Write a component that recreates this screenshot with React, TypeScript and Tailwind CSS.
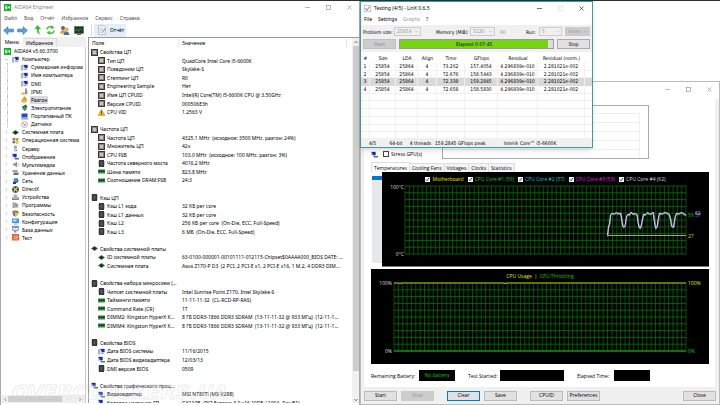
import type { ReactNode } from "react";
import { ChevronDown, ChevronRight, ChevronLeft, ChevronUp } from "lucide-react";

type IconName =
  | "app" | "pc" | "display" | "ipmi" | "flame" | "power" | "laptop" | "sensor" | "board"
  | "windows" | "server" | "sound" | "disk" | "net" | "directx" | "device" | "programs"
  | "shield" | "config" | "db" | "test" | "chip" | "cache" | "ram" | "warn";

const shapes: Record<IconName, ReactNode> = {
  app: (
    <>
      <rect width="14" height="14" fill="#12b32c" />
      <path d="M6 4H3v6h3V7H3M8 4v3h4M11 4v6" stroke="#fff" strokeWidth="1.4" fill="none" />
    </>
  ),
  pc: (
    <>
      <rect x="0" y="2" width="4" height="11" fill="#a9b4c4" />
      <rect x="4" y="1" width="10" height="8" fill="#c9d4ee" />
      <path d="M5 2h8v6H8z" fill="#1527c8" />
      <path d="M7 9h4v2h2v1H5v-1h2z" fill="#8c97ab" />
    </>
  ),
  display: (
    <>
      <rect x="0" y="1" width="10" height="8" fill="#b8c6e8" />
      <path d="M1 2h8v6H4z" fill="#1424cf" />
      <path d="M4 9h4v2H4z" fill="#7a879c" />
      <path d="M6 10h8v3H6z" fill="#3b8a4c" />
    </>
  ),
  ipmi: (
    <>
      <path d="M3 13h10V6H9z" fill="#c4c6c9" />
      <rect x="8" y="1" width="4" height="11" fill="#8d949b" />
      <rect x="1" y="9" width="5" height="4" fill="#d8b53c" />
    </>
  ),
  flame: (
    <>
      <path d="M6 0c4 4 7 6 5 10-1 4-9 5-10 0 0-3 3-3 5-10z" fill="#f08a12" />
      <path d="M6 6c2 2 3 3 2 6H4c-1-3 1-3 2-6z" fill="#ffd23e" />
    </>
  ),
  power: (
    <>
      <path d="M2 5l8-4 3 5-7 6z" fill="#4d5a55" />
      <path d="M2 8l5-3 5 5-5 4z" fill="#2f9e4a" />
    </>
  ),
  laptop: (
    <>
      <rect x="1" y="1" width="12" height="8" fill="#1c4ed0" />
      <path d="M0 10h14v3H1z" fill="#98a2b4" />
    </>
  ),
  sensor: (
    <>
      <circle cx="7" cy="7" r="6" fill="#fff" stroke="#b99a9a" strokeWidth="1.5" />
      <path d="M4 4l4 5M7 9l3-4" stroke="#cc3a34" strokeWidth="1.5" />
    </>
  ),
  board: (
    <>
      <path d="M0 7l7-5 7 5-7 5z" fill="#2c6b40" />
      <path d="M3 7l4-3 4 3-4 3z" fill="#1c2b24" />
    </>
  ),
  windows: (
    <>
      <path d="M1 3q3-2 5-1v5q-3-1-5 0z" fill="#ef5a24" />
      <path d="M7 2q3 1 6-1v6q-3 1-6 0z" fill="#7cba2c" />
      <path d="M1 8q3-1 5 0v5q-3-1-5 0z" fill="#2b8be0" />
      <path d="M7 8q3 1 6 0v5q-3 1-6 0z" fill="#f9b81e" />
    </>
  ),
  server: (
    <>
      <rect x="4" y="1" width="6" height="12" fill="#c2c8ce" />
      <path d="M5 3h4M5 5h4" stroke="#69727c" />
      <rect x="8" y="10" width="2" height="2" fill="#35a858" />
    </>
  ),
  sound: (
    <>
      <path d="M2 5h3l5-4v12L5 9H2z" fill="#8a929b" />
      <path d="M12 4q2 3 0 6" stroke="#4590c8" fill="none" />
    </>
  ),
  disk: (
    <>
      <rect x="1" y="2" width="10" height="4" fill="#9aa2aa" />
      <rect x="3" y="7" width="10" height="5" fill="#68717a" />
      <rect x="10" y="9" width="2" height="2" fill="#41c05b" />
    </>
  ),
  net: (
    <>
      <circle cx="8" cy="5" r="5" fill="#3578da" />
      <path d="M5 3q4-2 5 1l-3 3z" fill="#59bd55" />
      <path d="M2 8h6v4H2z" fill="#24329c" />
    </>
  ),
  directx: (
    <>
      <circle cx="7" cy="7" r="6.5" fill="#1c2a7a" />
      <path d="M3 3l8 8M11 3l-8 8" stroke="#f0dc2a" strokeWidth="2.5" />
    </>
  ),
  device: (
    <>
      <path d="M4 1h6l1 6H3z" fill="#9fb5a5" />
      <path d="M0 7h14v5H0z" fill="#7c8790" />
      <path d="M2 9h10" stroke="#d8dde1" />
    </>
  ),
  programs: (
    <>
      <rect x="1" y="1" width="8" height="11" fill="#9aa1a8" />
      <rect x="5" y="3" width="8" height="9" fill="#c7cdd4" />
      <path d="M6 5h6M6 7h6M6 9h4" stroke="#546070" />
    </>
  ),
  shield: (
    <>
      <path d="M7 0v7H1V2q4 0 6-2z" fill="#e84c24" />
      <path d="M7 0q3 2 6 2v5H7z" fill="#58a830" />
      <path d="M1 7h6v7Q2 11 1 7z" fill="#2f70d8" />
      <path d="M7 7h6q-1 4-6 7z" fill="#f7c022" />
    </>
  ),
  config: (
    <>
      <rect x="0" y="1" width="14" height="9" fill="#3f97e4" />
      <rect x="2" y="3" width="7" height="4" fill="#bfe0fa" />
      <path d="M4 11h7v2H4z" fill="#8792a0" />
    </>
  ),
  db: (
    <>
      <rect x="1" y="1" width="12" height="8" fill="#d3dff2" stroke="#4c6cb4" />
      <rect x="1" y="1" width="12" height="2" fill="#3a64c2" />
      <path d="M4 9h5v4H4z" fill="#87919f" />
    </>
  ),
  test: (
    <>
      <rect width="14" height="13" fill="#f0622a" />
      <path d="M3 4h3v6H3M8 4h3v3H8v3h3" stroke="#ffd9bd" strokeWidth="1.3" fill="none" />
    </>
  ),
  chip: (
    <>
      <rect width="14" height="14" fill="#3a3735" />
      <rect x="2" y="2" width="10" height="10" fill="#8a847f" />
      <rect x="4" y="4" width="6" height="6" fill="#c8c4be" />
    </>
  ),
  cache: (
    <>
      <rect x="2" y="0" width="10" height="14" fill="#36373a" />
      <path d="M1 2v10M13 2v10" stroke="#8b8d90" strokeDasharray="1 1" strokeWidth="2" />
      <rect x="5" y="3" width="4" height="8" fill="#57595d" />
    </>
  ),
  ram: (
    <>
      <rect y="3" width="14" height="8" fill="#1f8a44" />
      <path d="M2 5h3v3H2zM6 5h3v3H6zM10 5h3v3h-3z" fill="#1b2a22" />
      <path d="M0 10.5h14" stroke="#c9b54a" />
    </>
  ),
  warn: (
    <>
      <path d="M7 0l7 13H0z" fill="#f7b41c" stroke="#d98c0c" />
      <path d="M7 4v5M7 10v2" stroke="#3a2a08" strokeWidth="1.6" />
    </>
  ),
};

const Icon = ({ name }: { name: IconName }) => (
  <svg viewBox="0 0 14 14" className="size-[7px] shrink-0">{shapes[name]}</svg>
);

interface TreeItem {
  icon: IconName;
  text: string;
  level: number;
  selected?: boolean;
}

const tree: TreeItem[] = [
  { icon: "app", text: "AIDA64 v5.60.3700", level: 0 },
  { icon: "pc", text: "Компьютер", level: 1 },
  { icon: "pc", text: "Суммарная информа", level: 2 },
  { icon: "pc", text: "Имя компьютера", level: 2 },
  { icon: "pc", text: "DMI", level: 2 },
  { icon: "ipmi", text: "IPMI", level: 2 },
  { icon: "flame", text: "Разгон", level: 2, selected: true },
  { icon: "power", text: "Электропитание", level: 2 },
  { icon: "laptop", text: "Портативный ПК", level: 2 },
  { icon: "sensor", text: "Датчики", level: 2 },
  { icon: "board", text: "Системная плата", level: 1 },
  { icon: "windows", text: "Операционная система", level: 1 },
  { icon: "server", text: "Сервер", level: 1 },
  { icon: "display", text: "Отображение", level: 1 },
  { icon: "sound", text: "Мультимедиа", level: 1 },
  { icon: "disk", text: "Хранение данных", level: 1 },
  { icon: "net", text: "Сеть", level: 1 },
  { icon: "directx", text: "DirectX", level: 1 },
  { icon: "device", text: "Устройства", level: 1 },
  { icon: "programs", text: "Программы", level: 1 },
  { icon: "shield", text: "Безопасность", level: 1 },
  { icon: "config", text: "Конфигурация", level: 1 },
  { icon: "db", text: "База данных", level: 1 },
  { icon: "test", text: "Тест", level: 1 },
];

// [icon, field, value]; no value means a group heading, null is an empty line
type ReportRow = [IconName, string, string?] | null;

const report: ReportRow[] = [
  ["chip", "Свойства ЦП"],
  ["chip", "Тип ЦП", "QuadCore Intel Core i5-6600K"],
  ["chip", "Псевдоним ЦП", "Skylake-S"],
  ["chip", "Степпинг ЦП", "R0"],
  ["chip", "Engineering Sample", "Нет"],
  ["chip", "Имя ЦП CPUID", "Intel(R) Core(TM) i5-6600K CPU @ 3.50GHz"],
  ["chip", "Версия CPUID", "000506E3h"],
  ["warn", "CPU VID", "1.2563 V"],
  null,
  ["chip", "Частота ЦП"],
  ["chip", "Частота ЦП", "4325.1 MHz  (исходное: 3500 MHz, разгон: 24%)"],
  ["chip", "Множитель ЦП", "42x"],
  ["chip", "CPU FSB", "103.0 MHz  (исходное: 100 MHz, разгон: 3%)"],
  ["cache", "Частота северного моста", "4016.2 MHz"],
  ["ram", "Шина памяти", "823.8 MHz"],
  ["ram", "Соотношение DRAM:FSB", "24:3"],
  null,
  ["cache", "Кэш ЦП"],
  ["cache", "Кэш L1 кода", "32 КБ per core"],
  ["cache", "Кэш L1 данных", "32 КБ per core"],
  ["cache", "Кэш L2", "256 КБ per core  (On-Die, ECC, Full-Speed)"],
  ["cache", "Кэш L3", "6 МБ  (On-Die, ECC, Full-Speed)"],
  null,
  ["board", "Свойства системной платы"],
  ["board", "ID системной платы", "63-0100-000001-00101111-012115-Chipset$0AAAA000_BIOS DATE: ..."],
  ["board", "Системная плата", "Asus Z170-P D3  (2 PCI, 2 PCI-E x1, 2 PCI-E x16, 1 M.2, 4 DDR3 DIM..."],
  null,
  ["cache", "Свойства набора микросхем (..."],
  ["cache", "Чипсет системной платы", "Intel Sunrise Point Z170, Intel Skylake-S"],
  ["ram", "Тайминги памяти", "11-11-11-32  (CL-RCD-RP-RAS)"],
  ["ram", "Command Rate (CR)", "1T"],
  ["ram", "DIMM2: Kingston HyperX K...", "8 ГБ DDR3-1866 DDR3 SDRAM  (13-11-11-32 @ 933 МГц)  (12-11-1..."],
  ["ram", "DIMM4: Kingston HyperX K...", "8 ГБ DDR3-1866 DDR3 SDRAM  (13-11-11-32 @ 933 МГц)  (12-11-1..."],
  null,
  ["cache", "Свойства BIOS"],
  ["pc", "Дата BIOS системы", "11/16/2015"],
  ["display", "Дата BIOS видеоадаптера", "12/03/13"],
  ["cache", "DMI версия BIOS", "0509"],
  null,
  ["display", "Свойства графического проц..."],
  ["display", "Видеоадаптер", "MSI N780Ti (MS-V298)"],
  ["display", "Кодовое название ГП", "GK110B  (PCI Express 3.0 x16 10DE / 100A, Rev B1)"],
];

const runs = [
  ["1", "25854", "25864", "4", "73.202", "157.4054", "4.296839e-010", "2.281021e-002"],
  ["2", "25854", "25864", "4", "72.676", "158.5443", "4.296839e-010", "2.281021e-002"],
  ["3", "25854", "25864", "4", "72.338", "159.2845", "4.296839e-010", "2.281021e-002"],
  ["4", "25854", "25864", "4", "72.658", "158.5830", "4.296839e-010", "2.281021e-002"],
  ...Array.from({ length: 6 }, () => Array(8).fill("")),
];

const WindowButtons = ({ dark = false, noMax = false }: { dark?: boolean; noMax?: boolean }) => (
  <div className={dark ? "flex gap-4 pr-2 text-[#333]" : "flex gap-4 pr-[7px] text-[#999]"}>
    {["Minimize", "Maximize", "Close"].map((label, i) => (
      <button key={label} aria-label={label} className="flex size-[5px] items-center">
        <svg viewBox="0 0 5 5" className="size-[5px] overflow-visible" fill="none" stroke={noMax && i === 1 ? "#ddd" : "currentColor"} strokeWidth="0.7">
          {i === 0 && <path d="M0 2.5h5" />}
          {i === 1 && <rect x="0.5" y="0.5" width="4" height="4" />}
          {i === 2 && <path d="M0.5 0.5l4 4M4.5 0.5l-4 4" />}
        </svg>
      </button>
    ))}
  </div>
);

const Toolbar = () => (
  <div className="flex h-[14px] shrink-0 items-center pl-[2px]">
    <button aria-label="Back" className="mr-[3px]">
      <svg viewBox="0 0 22 18" className="h-[9px] w-[11px]"><path d="M1 9l9-8v5h11v6H10v5z" fill="#5a9fd6" stroke="#3f78ae" /></svg>
    </button>
    <button aria-label="Forward" className="mr-[6px]">
      <svg viewBox="0 0 22 18" className="h-[9px] w-[11px]"><path d="M21 9l-9-8v5H1v6h11v5z" fill="#5a9fd6" stroke="#3f78ae" /></svg>
    </button>
    <button aria-label="Up" className="mr-[4px]">
      <svg viewBox="0 0 16 20" className="h-[10px] w-[8px]"><path d="M7 0l7 8h-4c-1 5 0 8 3 11-6-1-8-5-7-11H1z" fill="#31c431" /></svg>
    </button>
    <button aria-label="Refresh" className="mr-[5px]">
      <svg viewBox="0 0 18 20" className="h-[10px] w-[9px]" fill="none" stroke="#43c332" strokeWidth="3">
        <path d="M2 9c0-5 6-7 11-4M16 11c0 5-6 7-11 4" />
        <path d="M11 0l6 6-7 2zM7 20l-6-6 7-2z" fill="#43c332" stroke="none" />
      </svg>
    </button>
    <button aria-label="Users" className="mr-[4px]">
      <svg viewBox="0 0 20 20" className="size-[10px]">
        <circle cx="6" cy="6" r="4" fill="#8a5a2c" /><path d="M0 17q1-7 6-7t6 7z" fill="#c9a04e" />
        <circle cx="13" cy="9" r="4" fill="#d8a877" /><path d="M7 20q1-7 6-7t6 7z" fill="#4f6d9e" />
      </svg>
    </button>
    <button aria-label="Monitoring">
      <svg viewBox="0 0 20 18" className="h-[9px] w-[10px]">
        <rect x="1" y="1" width="18" height="14" fill="#143c22" stroke="#555" />
        <path d="M3 10l3-4 3 5 3-6 5 4" stroke="#3ecf5a" fill="none" /><path d="M6 16h8v2H6z" fill="#666" />
      </svg>
    </button>
    <div className="ml-[7px] h-3 w-px bg-[#ddd]" />
    <button className="ml-[2px] flex h-[13px] w-8 items-center gap-[3px] bg-[#e0eff9] pl-1 text-black">
      <svg viewBox="0 0 18 20" className="h-[10px] w-[9px] shrink-0">
        <path d="M1 1h10l4 4v14H1z" fill="#f4f7fa" stroke="#8b9aac" /><path d="M3 6h8M3 9h7M3 12h8M3 15h6" stroke="#9db6d0" />
        <path d="M16 7l-6 8-2 1 1-3 5-7z" fill="#c59843" />
      </svg>
      Отчёт
    </button>
  </div>
);

const TreeRow = ({ icon, text, level, selected }: TreeItem) => (
  <li className={level === 2 ? "ml-[6px] flex items-center gap-[2px] border-l border-dotted border-[#bbb] pl-[13px]" : "flex items-center gap-[2px] pl-[3px]"}>
    {level === 1 && (text === "Компьютер"
      ? <ChevronDown className="mr-px size-[5px] shrink-0 text-[#555]" />
      : <ChevronRight className="mr-px size-[5px] shrink-0 text-[#888]" />)}
    <Icon name={icon} />
    <span className={selected ? "bg-[#dadada] px-px leading-[8px]" : "px-px leading-[8px]"}>{text}</span>
  </li>
);

const AidaWindow = () => (
  <section className="absolute top-0 bottom-0 left-0 flex w-1/2 flex-col overflow-hidden border-x border-[#aaa] bg-white pb-[2px] font-['Noto_Sans','Open_Sans',sans-serif] text-[5px] leading-[8px] text-black">
    <header className="flex h-3 shrink-0 items-center pl-[3px] text-[#888]">
      <Icon name="app" />
      <h1 className="ml-[3px] flex-1">AIDA64 Engineer</h1>
      <WindowButtons />
    </header>
    <nav className="flex h-[10px] shrink-0 items-center gap-[7px] pl-[3px] text-[#555]">
      {["Файл", "Вид", "Отчёт", "Избранное", "Сервис", "Справка"].map((m) => <button key={m}>{m}</button>)}
    </nav>
    <Toolbar />
    <div className="flex min-h-0 flex-1">
      <aside className="flex w-[85px] shrink-0 flex-col bg-[#f0f0f0]">
        <div className="flex h-[10px] shrink-0">
          <button className="w-[22px] bg-white text-black">Меню</button>
          <button className="mt-px w-[34px] border-t border-r border-[#ddd]">Избранное</button>
        </div>
        <div className="flex flex-1 flex-col justify-between overflow-hidden border-r border-[#ccc] bg-white">
          <ul className="grid h-[195px] auto-rows-fr whitespace-nowrap">
            {tree.map((t) => <TreeRow key={t.text} {...t} />)}
          </ul>
          <div className="flex h-2 items-center justify-between bg-[#f0f0f0] px-[2px]">
            <ChevronLeft className="size-[5px]" />
            <div className="mr-4 h-[6px] w-[60px] bg-[#cdcdcd]" />
            <ChevronRight className="size-[5px]" />
          </div>
        </div>
      </aside>
      <div className="ml-[2px] flex min-w-0 flex-1 overflow-hidden border-t border-l border-[#999]">
        <table className="block min-w-0 flex-1 overflow-hidden">
          <thead className="block">
            <tr className="grid h-[10px] grid-cols-[90px_1fr_5px] items-center text-left">
              <th className="border-r border-[#e5e5e5] pl-[3px] font-normal">Поле</th>
              <th className="border-r border-[#e5e5e5] pl-[3px] font-normal">Значение</th>
            </tr>
          </thead>
          <tbody className="grid h-[359px] auto-rows-fr">
            {report.map((row, i) => (
              <tr key={i} className="grid grid-cols-[90px_1fr] items-center whitespace-pre">
                {row && (
                  <>
                    <td className={row[2] ? "flex items-center gap-[2px] pl-[9px]" : "flex items-center gap-[2px] pl-[2px]"}>
                      <Icon name={row[0]} />
                      {row[1]}
                    </td>
                    <td className="pl-[3px]">{row[2]}</td>
                  </>
                )}
              </tr>
            ))}
          </tbody>
        </table>
        <div className="flex w-[7px] shrink-0 flex-col items-center bg-[#f0f0f0] pt-px">
          <ChevronUp className="size-[6px] shrink-0" />
          <div className="my-px w-[6px] flex-13 bg-[#cdcdcd]" />
          <div className="flex-1" />
          <ChevronDown className="size-[6px] shrink-0" />
        </div>
      </div>
    </div>
  </section>
);

const columns = ["#", "Size", "LDA", "Align", "Time", "GFlops", "Residual", "Residual (norm.)"];

const LinxWindow = () => (
  <section className="absolute top-0 left-1/2 flex h-[147px] w-[233px] flex-col border border-[#3f9a9c] bg-white font-['DejaVu_Sans_Condensed','DejaVu_Sans',sans-serif] text-[5px] leading-[8px] text-black shadow-md">
    <header className="flex h-3 shrink-0 items-center pl-[3px] font-['Noto_Sans',sans-serif]">
      <svg viewBox="0 0 14 14" className="size-[7px]">
        <rect x="0.5" y="0.5" width="13" height="13" fill="#fff" stroke="#7aa7d6" />
        <path d="M3 6l3 5 5-8" stroke="#e2622a" strokeWidth="2" fill="none" />
      </svg>
      <h1 className="ml-[3px] flex-1">Testing (4/5) - LinX 0.6.5</h1>
      <WindowButtons dark noMax />
    </header>
    <nav className="flex h-[11px] shrink-0 items-center gap-[6px] pb-px pl-[3px] font-['Noto_Sans',sans-serif]">
      <button>File</button>
      <button>Settings</button>
      <button className="text-[#999]" disabled>Graphs</button>
      <button>?</button>
    </nav>
    <div className="shrink-0 bg-[#f0f0f0] px-[2px] pt-[2px] pb-[3px]">
      <div className="flex h-[9px] items-center">
        <label htmlFor="size" className="w-[31px] whitespace-nowrap">Problem size:</label>
        <Select id="size" value="25854" className="w-[27px]" />
        <label htmlFor="mem" className="ml-[15px] w-[34px] whitespace-nowrap">Memory (MiB):</label>
        <Select id="mem" value="5120" className="w-[25px]" />
        <button className="ml-[5px] text-[#999]">All</button>
        <label htmlFor="run" className="ml-auto pr-[3px]">Run:</label>
        <Select id="run" value="5" className="w-[23px]" />
        <Select id="unit" label="Unit" value="times" className="ml-[3px] w-[25px] bg-[#ccc]" />
      </div>
      <div className="mt-[3px] flex h-[10px]">
        <button disabled className="w-[33px] border border-[#bfbfbf] bg-[#ccc] leading-[7px] text-[#888]">Start</button>
        <div className="mx-[3px] flex flex-1 border border-[#999] bg-[#ddd]">
          <div className="w-[97%] bg-[#76d510] text-center leading-[8px]" role="progressbar" aria-valuenow={97}>Elapsed 0:07:45</div>
        </div>
        <button className="w-[33px] border border-[#aaa] bg-[#e1e1e1] leading-[7px]">Stop</button>
      </div>
    </div>
    <table className="block flex-1 overflow-hidden">
      <thead className="block">
        <tr className="grid h-[11px] grid-cols-[9px_26px_22px_19px_28px_33px_40px_47px_1fr] items-center">
          {columns.map((c) => <th key={c} className="font-normal whitespace-nowrap">{c}</th>)}
        </tr>
      </thead>
      <tbody className="grid h-[77px] auto-rows-fr">
        {runs.map((run, i) => (
          <tr key={i} className={i === 2 ? "grid grid-cols-[9px_26px_22px_19px_28px_33px_40px_47px_1fr] bg-[#d9d9d9]" : "grid grid-cols-[9px_26px_22px_19px_28px_33px_40px_47px_1fr] border-b border-[#f0f0f0]"}>
            {run.map((v, j) => <td key={j} className="border-r border-[#f0f0f0] text-center leading-[7px] whitespace-nowrap">{v}</td>)}
          </tr>
        ))}
      </tbody>
    </table>
    <footer className="flex h-[9px] shrink-0 items-center bg-[#f0f0f0] whitespace-nowrap">
      <span className="w-[23px] text-center">4/5</span>
      <span className="w-6 text-center">64-bit</span>
      <span className="w-[25px] text-center">4 threads</span>
      <span className="w-[71px] pl-[2px]">159.2845 GFlops peak</span>
      <span>Intel® Core™ i5-6600K</span>
    </footer>
  </section>
);

const Select = ({ id, value, className, label }: { id: string; value: string; className: string; label?: string }) => (
  <div className={`relative flex h-[9px] items-center border border-[#ccc] text-[#999] ${className}`}>
    <select id={id} aria-label={label} disabled className="h-[7px] w-full appearance-none pl-[2px] leading-[7px] opacity-100">
      <option>{value}</option>
    </select>
    <ChevronDown className="absolute right-px size-[5px]" />
  </div>
);

// core temperature trace: idle, then four load cycles
const trace =
  "225.5,51.5 226.5,42 227.5,40 228.5,30.5 230,29 232,30 234,28.5 236,29.5 238.5,29 239.5,34 240.5,41 241.5,43 243,42 244.5,32 246,30 247.5,31 249,28 251,30 253,29.5 255,30.5 256,38 257,43 258.5,44 260,37 261.5,30 263,31 265,28.5 267,29.5 269,30 271,28 272.5,38 273.5,44 275,43 276.5,33 277.5,29 280,30 282,28.5 285,29 287,30 288.5,35 289.5,42 291.5,43 293,33 294.5,29 296,30 298,29 300,28.5 302,30 304,31";

const Grid = ({ x, y, w, h, cols }: { x: number; y: number; w: number; h: number; cols: number }) => (
  <g strokeWidth="0.8">
    {Array.from({ length: cols + 1 }, (_, i) => <line key={i} x1={x + (w * i) / cols} x2={x + (w * i) / cols} y1={y} y2={y + h} stroke="#006a00" />)}
    {Array.from({ length: 11 }, (_, i) => <line key={i} x1={x} x2={x + w} y1={y + (h * i) / 10} y2={y + (h * i) / 10} stroke="#007a00" />)}
  </g>
);

const legend = [
  ["Motherboard", "text-[#e8e800]"],
  ["CPU Core #1 (59)", "text-[#00d000]"],
  ["CPU Core #2 (57)", "text-[#00d0d0]"],
  ["CPU Core #3 (59)", "text-[#e020e0]"],
  ["CPU Core #4 (62)", "text-[#ddd]"],
];

const StabilityWindow = () => (
  <section className="absolute top-20 right-0 bottom-0 left-1/2 flex flex-col border border-[#bbb] bg-[#f0f0f0] font-['Open_Sans','Noto_Sans',sans-serif] text-[5px] leading-[8px] text-black">
    <header className="flex h-[17px] shrink-0 items-center justify-end bg-white pb-[3px]">
      <WindowButtons />
    </header>
    <div className="mr-1 ml-[3px] flex min-h-0 flex-1 flex-col bg-white pr-[6px] pl-[7px]">
      <div className="flex h-[60px] shrink-0 items-end pt-[6px]">
        <label className="flex w-[71px] items-center gap-[2px] pb-px">
          <Icon name="display" />
          <input type="checkbox" className="ml-[3px] size-[6px] appearance-none border border-[#444] bg-white" />
          <span className="whitespace-nowrap">Stress GPU(s)</span>
        </label>
        <div className="mr-[60px] flex h-full flex-1 flex-col justify-end border border-[#aaa] pr-2">
          {[0, 1, 2, 3, 4].map((n) => <div key={n} className="h-[9px] border-t border-r border-[#eee]" />)}
        </div>
      </div>
      <div className="mt-[3px] flex h-[10px] shrink-0 items-end" role="tablist">
        {["Temperatures", "Cooling Fans", "Voltages", "Clocks", "Statistics"].map((t, i) => (
          <button key={t} role="tab" className={i === 0 ? "h-[10px] border-x border-t border-[#ddd] bg-white px-[2px]" : "h-[9px] border-t border-r border-[#ddd] bg-[#f4f4f4] px-[2px]"}>{t}</button>
        ))}
      </div>
      <div className="flex h-[95px] shrink-0 pl-px">
        <div className="my-1 w-[10px] border-t-4 border-[#0078d7] bg-[#e6e8ea]" />
        <div className="flex flex-1 flex-col border-b border-[#777] bg-black pt-[3px]">
          <div className="flex h-[8px] shrink-0 items-center justify-center gap-1">
            {legend.map(([text, color]) => (
              <label key={text} className={`flex items-center gap-[2px] whitespace-nowrap ${color}`}>
                <span className="relative flex size-[5px]">
                  <input type="checkbox" defaultChecked className="size-[5px] appearance-none bg-white" />
                  <svg viewBox="0 0 5 5" className="absolute size-[5px]"><path d="M1 2.5l1 1.3 2-3" stroke="#1548c8" fill="none" /></svg>
                </span>
                {text}
              </label>
            ))}
          </div>
          <svg viewBox="0 0 327 83" className="h-[83px] w-full">
            <Grid x={23} y={3} w={281} h={68} cols={65} />
            <path d="M225.5 52.5H304" stroke="#c8c800" strokeWidth="0.9" />
            <g fill="none" strokeWidth="0.8">
              <polyline points={trace} stroke="#22c7c7" transform="translate(0 2)" />
              <polyline points={trace} stroke="#d848d8" transform="translate(0.6 1)" />
              <polyline points={trace} stroke="#e8e8e8" transform="translate(0 1)" />
            </g>
            <g fontSize="5" fill="#ddd">
              <text x="22" y="6" textAnchor="end">100°C</text>
              <text x="22" y="73" textAnchor="end">0°C</text>
              <text x="306" y="34" fill="#00c000">59</text>
              <text x="313" y="34" fill="#38a0e0">57</text>
              <text x="313" y="32" fill="#e8b0e8">62</text>
              <text x="306" y="55" fill="#d8d800">27</text>
            </g>
          </svg>
        </div>
      </div>
      <div className="mt-[2px] flex h-[95px] shrink-0 flex-col bg-black pt-[3px]">
        <p className="text-center text-[#00d000]"><span className="text-[#e8e800]">CPU Usage</span> <span className="text-[#ddd]">&nbsp;|&nbsp;</span> CPU Throttling</p>
        <svg viewBox="0 0 338 84" className="h-[84px] w-full">
          <Grid x={23} y={3} w={292} h={68} cols={67} />
          <path d="M23 71H315" stroke="#00c000" />
          <path d="M23 3h5l1 1 1-1h103l1 1 1-1h180" stroke="#b8b800" fill="none" />
          <g fontSize="5" fill="#ddd">
            <text x="21" y="5" textAnchor="end">100%</text>
            <text x="21" y="73" textAnchor="end">0%</text>
            <text x="317" y="5" fill="#e8e800">100%</text>
            <text x="317" y="73" fill="#00d000">0%</text>
          </g>
        </svg>
      </div>
      <div className="mt-[6px] flex h-[11px] shrink-0 items-center whitespace-nowrap">
        <span className="w-12">Remaining Battery:</span>
        <output className="h-[11px] w-9 bg-black text-center leading-[10px] text-[#00d000]">No battery</output>
        <span className="ml-[13px] w-8">Test Started:</span>
        <output className="h-[11px] w-16 bg-black" />
        <span className="ml-[13px] w-[37px]">Elapsed Time:</span>
        <output className="h-[11px] w-9 bg-black" />
      </div>
    </div>
    <div className="flex h-[17px] shrink-0 items-center gap-[4px] px-[3px]">
      <DialogButton>Start</DialogButton>
      <button disabled className="h-[10px] w-[33px] bg-[#ccc] leading-[9px] text-[#999]">Stop</button>
      <button className="ml-[9px] h-[10px] w-[33px] border border-[#0078d7] bg-[#e1e1e1] leading-[7px]">Clear</button>
      <DialogButton>Save</DialogButton>
      <span className="w-[5px]" />
      <DialogButton>CPUID</DialogButton>
      <DialogButton>Preferences</DialogButton>
      <span className="flex-1" />
      <DialogButton>Close</DialogButton>
    </div>
  </section>
);

const DialogButton = ({ children }: { children: ReactNode }) => (
  <button className="h-[10px] w-[33px] border border-[#bbb] bg-[#e1e1e1] leading-[7px]">{children}</button>
);

const App = () => (
  <main className="relative h-screen min-h-[405px] w-full overflow-hidden border-t border-[#302e33] bg-white">
    <StabilityWindow />
    <AidaWindow />
    <LinxWindow />
    <div className="pointer-events-none absolute bottom-[3px] left-3 font-['DejaVu_Sans',sans-serif] text-[20px] leading-5 font-bold text-white/10 italic [-webkit-text-stroke:1px_#cccccc66]">OVERCLOCKERS.UA</div>
  </main>
);

export default App;
